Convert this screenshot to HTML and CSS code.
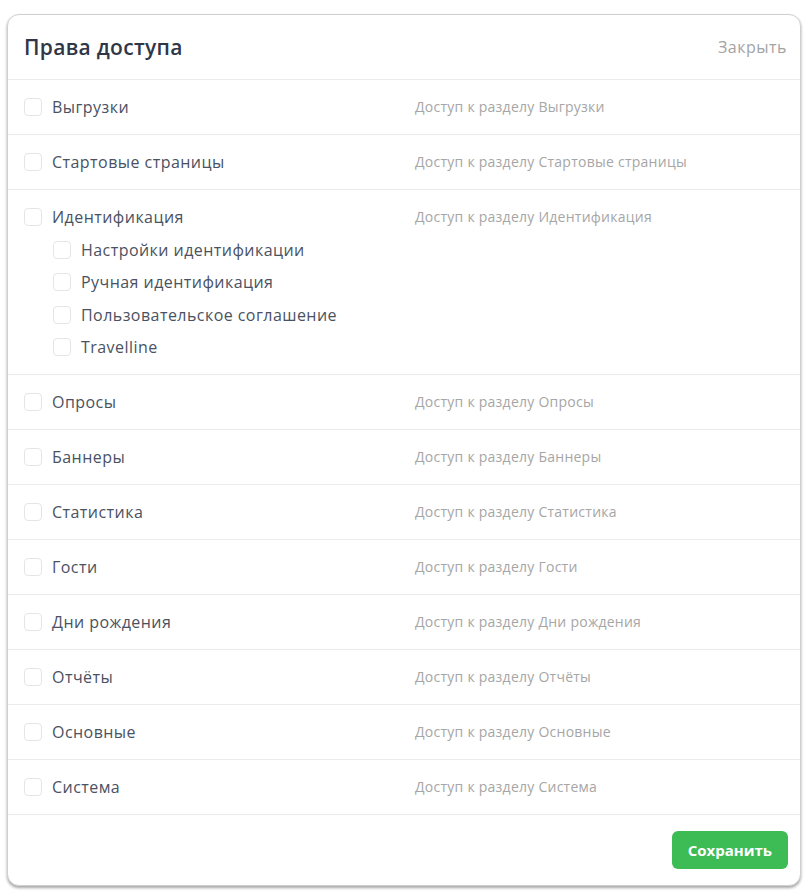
FILE: index.html
```html
<!DOCTYPE html>
<html lang="ru">
<head>
    <meta charset="UTF-8">
    <meta name="viewport" content="width=device-width, initial-scale=1.0">
    <title>Права доступа</title>
    <link rel="stylesheet" href="styles.css">
</head>
<body>
    <div class="modal">
        <header class="modal-header">
            <h1>Права доступа</h1>
            <a href="javascript:void(0);" class="close">Закрыть</a>
        </header>

        <ul class="rights">
            <li class="right">
                <div class="items">
                    <label class="item"><span class="check"></span>Выгрузки</label>
                </div>
                <div class="desc">Доступ к разделу Выгрузки</div>
            </li>
            <li class="right">
                <div class="items">
                    <label class="item"><span class="check"></span>Стартовые страницы</label>
                </div>
                <div class="desc">Доступ к разделу Стартовые страницы</div>
            </li>
            <li class="right">
                <div class="items">
                    <label class="item"><span class="check"></span>Идентификация</label>
                    <label class="item sub"><span class="check"></span>Настройки идентификации</label>
                    <label class="item sub"><span class="check"></span>Ручная идентификация</label>
                    <label class="item sub"><span class="check"></span>Пользовательское соглашение</label>
                    <label class="item sub"><span class="check"></span>Travelline</label>
                </div>
                <div class="desc">Доступ к разделу Идентификация</div>
            </li>
            <li class="right">
                <div class="items">
                    <label class="item"><span class="check"></span>Опросы</label>
                </div>
                <div class="desc">Доступ к разделу Опросы</div>
            </li>
            <li class="right">
                <div class="items">
                    <label class="item"><span class="check"></span>Баннеры</label>
                </div>
                <div class="desc">Доступ к разделу Баннеры</div>
            </li>
            <li class="right">
                <div class="items">
                    <label class="item"><span class="check"></span>Статистика</label>
                </div>
                <div class="desc">Доступ к разделу Статистика</div>
            </li>
            <li class="right">
                <div class="items">
                    <label class="item"><span class="check"></span>Гости</label>
                </div>
                <div class="desc">Доступ к разделу Гости</div>
            </li>
            <li class="right">
                <div class="items">
                    <label class="item"><span class="check"></span>Дни рождения</label>
                </div>
                <div class="desc">Доступ к разделу Дни рождения</div>
            </li>
            <li class="right">
                <div class="items">
                    <label class="item"><span class="check"></span>Отчёты</label>
                </div>
                <div class="desc">Доступ к разделу Отчёты</div>
            </li>
            <li class="right">
                <div class="items">
                    <label class="item"><span class="check"></span>Основные</label>
                </div>
                <div class="desc">Доступ к разделу Основные</div>
            </li>
            <li class="right">
                <div class="items">
                    <label class="item"><span class="check"></span>Система</label>
                </div>
                <div class="desc">Доступ к разделу Система</div>
            </li>
        </ul>

        <footer class="modal-footer">
            <button class="save">Сохранить</button>
        </footer>
    </div>
</body>
</html>
```

FILE: styles.css
```css
/* Окно прав доступа */
body {
    margin: 0;
    padding: 14px 9px 10px 7px;
    background-color: #fff;
    font-family: "Open Sans", "Noto Sans", sans-serif;
}

.modal {
    border: 1px solid #cfcfcf;
    border-radius: 12px;
    box-shadow: 0 2px 3px rgba(0, 0, 0, 0.35);
    background-color: #fff;
    overflow: hidden;
}

.modal-header {
    display: flex;
    align-items: center;
    justify-content: space-between;
    height: 64px;
    padding: 0 13px 0 16px;
    border-bottom: 1px solid #ececec;
}

h1 {
    margin: 0;
    font-size: 21px;
    font-weight: 600;
    letter-spacing: 0.3px;
    color: #2f3747;
}

.close {
    color: #a3a3a3;
    font-size: 16px;
    letter-spacing: 0.5px;
    text-decoration: none;
}

/* Список разделов */
.rights {
    list-style-type: none;
    margin: 0;
    padding: 0;
}

.right {
    display: grid;
    grid-template-columns: 391px 1fr;
    padding: 15px 16px;
    border-bottom: 1px solid #ececec;
}

.items {
    display: flex;
    flex-direction: column;
    gap: 8.5px;
}

.item {
    display: flex;
    align-items: center;
    height: 24px;
    font-size: 16px;
    letter-spacing: 0.45px;
    color: #4a5262;
}

.item.sub {
    margin-left: 29px;
}

.check {
    width: 16px;
    height: 16px;
    margin-right: 10px;
    border: 1px solid #e5e5e5;
    border-radius: 4px;
    background-color: #fff;
}

.desc {
    line-height: 24px;
    font-size: 14px;
    letter-spacing: 0.25px;
    color: #a6a6a6;
}

/* Кнопка сохранения */
.modal-footer {
    display: flex;
    justify-content: flex-end;
    padding: 16px 12px 16px;
}

.save {
    height: 38px;
    padding: 0 16px;
    font-family: inherit;
    font-size: 15px;
    font-weight: 700;
    color: #fff;
    background-color: #3dbb55;
    border: none;
    border-radius: 6px;
    cursor: pointer;
}
```
